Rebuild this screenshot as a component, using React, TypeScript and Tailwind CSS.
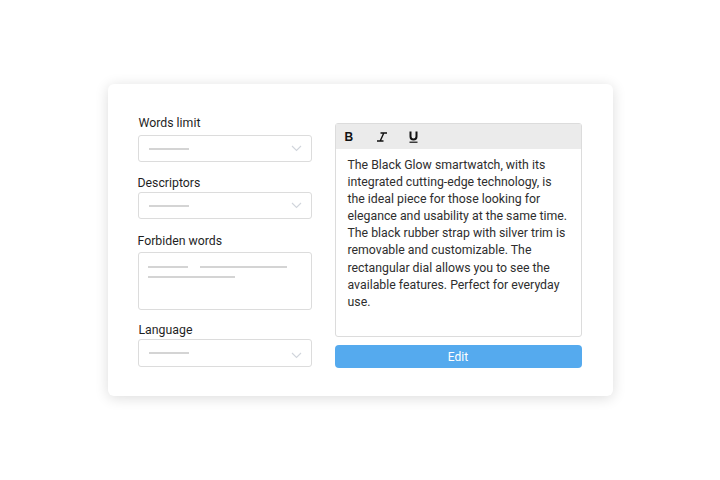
import React from 'react';

const font = { fontFamily: 'Roboto, "Liberation Sans", sans-serif' };

const Chevron = () => (
  <svg width="11" height="7" viewBox="0 0 11 7" className="text-gray-300">
    <path d="M1 1l4.5 4.5L10 1" fill="none" stroke="currentColor" strokeWidth="1.1" />
  </svg>
);

const Select = () => (
  <div className="flex h-[27px] items-center justify-between rounded-[3px] border border-[#dcdcdc] bg-white pl-[10px] pr-[9px]">
    <div className="h-[2px] w-[40px] bg-[#d4d4d4]" />
    <Chevron />
  </div>
);

const App = () => {
  return (
    <div className="flex h-screen w-full items-center justify-center bg-white" style={font}>
      <div className="flex h-[312px] w-[505px] gap-[23px] rounded-[6px] bg-white px-[30px] pt-[30px] shadow-[0_2px_14px_rgba(0,0,0,0.14)]">
        {/* Left column */}
        <div className="flex w-[174px] flex-col text-[12.3px] leading-[17px] text-[#1f1f1f]">
          <label className="mb-[3px] mt-[1px] pl-[1px]">Words limit</label>
          <Select />

          <label className="mb-0 mt-[13px]">Descriptors</label>
          <Select />

          <label className="mb-[2px] mt-[14px]">Forbiden words</label>
          <div className="h-[58px] rounded-[3px] border border-[#dcdcdc] bg-white px-[9px] pt-[13px]">
            <div className="flex gap-[12px]">
              <div className="h-[2px] w-[40px] bg-[#d4d4d4]" />
              <div className="h-[2px] w-[87px] bg-[#d4d4d4]" />
            </div>
            <div className="mt-[8px] h-[2px] w-[87px] bg-[#d4d4d4]" />
          </div>

          <label className="mb-0 mt-[12px] pl-[1px]">Language</label>
          <div className="flex h-[28px] items-center justify-between rounded-[3px] border border-[#dcdcdc] bg-white pl-[10px] pr-[9px]">
            <div className="h-[2px] w-[40px] bg-[#d4d4d4]" />
            <div className="mt-[4px]">
              <Chevron />
            </div>
          </div>
        </div>

        {/* Right column */}
        <div className="flex w-[247px] flex-col pt-[9px]">
          <div className="flex h-[214px] flex-col rounded-[3px] border border-[#dcdcdc] bg-white">
            <div className="flex h-[25px] items-center gap-[18px] bg-[#ebebeb] pl-[9px] text-[#111]">
              <span className="text-[12px] font-bold leading-none" style={{ fontFamily: '"Liberation Sans", Arial, sans-serif' }}>B</span>
              <svg width="12" height="10" viewBox="0 0 12 10" className="ml-[5px]">
                <path d="M4.5 1h6.5M1 9h6.5M7.8 1L4.2 9" fill="none" stroke="currentColor" strokeWidth="1.4" />
              </svg>
              <svg width="9" height="12" viewBox="0 0 9 12" className="ml-[3px]">
                <path d="M1.5 0.5v5a3 3 0 0 0 6 0v-5" fill="none" stroke="currentColor" strokeWidth="2" />
                <path d="M0.5 11.2h8" stroke="currentColor" strokeWidth="1.2" />
              </svg>
            </div>
            <p className="px-[12px] pt-[8px] text-[12.3px] leading-[17.1px] text-[#2e2e2e]">
              The Black Glow smartwatch, with its integrated cutting-edge technology, is the ideal piece for those looking for
              elegance and usability at the same time. The black rubber strap with silver trim is removable and customizable.
              The rectangular dial allows you to see the available features. Perfect for everyday use.
            </p>
          </div>
          <button className="mt-[8px] h-[23px] rounded-[4px] bg-[#55aaee] text-[12px] text-white">Edit</button>
        </div>
      </div>
    </div>
  );
};

export default App;
